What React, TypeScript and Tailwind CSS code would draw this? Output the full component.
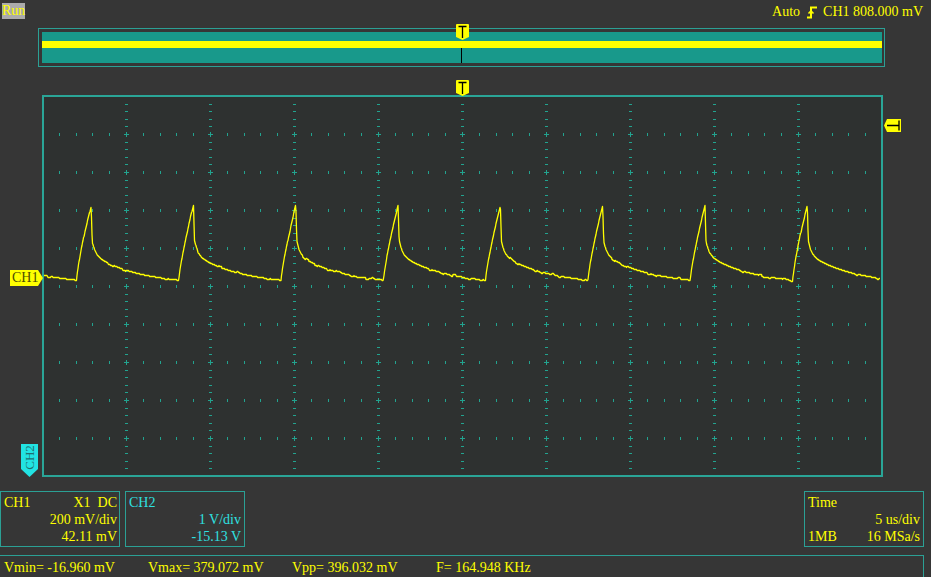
import React from 'react';

// waveform: sawtooth-like pulses, period in px at 5us/div
const PERIOD = 102.3;
const RISE_AT = 76.5;

function traceY(x: number) {
  let t = (x - RISE_AT) % PERIOD;
  if (t < 0) t += PERIOD;
  if (t <= 14.7) return 279.5 - 74.5 * Math.pow(t / 14.7, 0.8);
  if (t < 15.7) return 205 + 35 * (t - 14.7);
  const u = t - 15.7;
  return 280.3 - (27 * Math.exp(-u / 40) + 13 * Math.exp(-u / 3) - (2.5 * u) / 86.6);
}

// small deterministic jitter so the decay looks sampled
function jitter(i: number) {
  const s = Math.sin(i * 12.9898) * 43758.5453;
  const r = s - Math.floor(s);
  return r > 0.86 ? 1 : r < 0.08 ? -1 : 0;
}

function tracePoints() {
  const pts: string[] = [];
  for (let x = 44; x <= 880; x += 0.5) {
    const y = Math.round(traceY(x)) + jitter(Math.floor(x / 3));
    pts.push(`${x},${y + 0.5}`);
  }
  return pts.join(' ');
}

const MAJOR_X = [126, 210, 294, 378, 462, 546, 630, 714, 798];
const MAJOR_Y = [134, 172, 210, 248, 286, 324, 362, 400, 438];

function Graticule() {
  const items: React.ReactNode[] = [];
  MAJOR_X.forEach((x) => {
    for (let k = 1; k < 50; k++) {
      if (k % 5 === 0) continue;
      const y = Math.round(96 + 7.6 * k);
      items.push(<rect key={`v${x}-${k}`} x={x - 1} y={y} width={3} height={1} />);
    }
  });
  MAJOR_Y.forEach((y) => {
    for (let k = 1; k < 50; k++) {
      if (k % 5 === 0) continue;
      const x = Math.round(42 + 16.8 * k);
      items.push(<rect key={`h${y}-${k}`} x={x} y={y - 1} width={1} height={3} />);
    }
  });
  MAJOR_X.forEach((x) =>
    MAJOR_Y.forEach((y) => {
      items.push(<rect key={`ca${x}-${y}`} x={x - 2} y={y} width={5} height={1} />);
      items.push(<rect key={`cb${x}-${y}`} x={x} y={y - 2} width={1} height={5} />);
    })
  );
  return <g fill="#22a38f" shapeRendering="crispEdges">{items}</g>;
}

function TMarker() {
  return (
    <svg width={13} height={16} viewBox="0 0 13 16" className="block">
      <path d="M1 0 H12 Q13 0 13 1 V13 L6.5 16 L0 13 V1 Q0 0 1 0 Z" fill="#ffff00" />
      <path d="M2.5 2.5 H10.5 M6.5 2.5 V14" stroke="#000" strokeWidth={1.3} fill="none" />
    </svg>
  );
}

function EdgeIcon() {
  return (
    <svg width={10} height={13} viewBox="0 0 10 13" className="block">
      <path d="M0 11.5 H4 V1.5 H10" stroke="#ffff00" strokeWidth={2} fill="none" />
      <path d="M1.5 7.5 L4 5 L6.5 7.5" stroke="#ffff00" strokeWidth={1.6} fill="none" />
    </svg>
  );
}

export default function App() {
  return (
    <div className="w-[931px] h-[577px] bg-[#363636] flex flex-col overflow-hidden font-['Liberation_Serif','Times_New_Roman',serif] text-[14px] leading-[16px] text-[#ffff00]">
      {/* top line */}
      <div className="h-[28px] shrink-0 flex items-start justify-between">
        <div className="ml-[2px] mt-[3px] w-[23px] h-[16px] bg-[#ababab] text-center">Run</div>
        <div className="mt-[4px] mr-[8px] flex items-center">
          <span>Auto</span>
          <span className="ml-[7px] mr-[6px]">
            <EdgeIcon />
          </span>
          <span className="whitespace-pre">CH1 808.000 mV</span>
        </div>
      </div>

      {/* memory overview */}
      <div className="relative ml-[38px] w-[847px] h-[39px] shrink-0 border border-[#2ba095] pt-[3px] pb-[3px] pl-[3px] pr-[2px]">
        <div className="h-full bg-[#18998b] pt-[9px]">
          <div className="h-[7px] bg-[#ffff00]" />
          <div className="ml-[419px] w-px h-[15px] bg-black" />
        </div>
        <div className="absolute left-[417px] top-[-5px]">
          <TMarker />
        </div>
      </div>

      {/* plot */}
      <div className="relative ml-[42px] mt-[28px] w-[841px] h-[382px] shrink-0">
        <div className="w-full h-full border-2 border-[#2aa597] bg-[#2e3130]">
          <svg width={837} height={378} viewBox="44 97 837 378" className="block">
            <Graticule />
            <polyline points={tracePoints()} fill="none" stroke="#ffff00" strokeWidth={1.3} strokeLinejoin="round" />
          </svg>
        </div>

        <div className="absolute left-[414px] top-[-15px]">
          <TMarker />
        </div>

        {/* trigger level */}
        <div className="absolute left-[842px] top-[24px]">
          <svg width={17} height={13} viewBox="0 0 17 13" className="block">
            <path d="M0 6.5 L3 0 H17 V13 H3 Z" fill="#ffff00" />
            <path d="M3 6.5 H15 M15 1.5 V11.5" stroke="#000" strokeWidth={1.3} fill="none" />
          </svg>
        </div>

        {/* CH1 level */}
        <div className="absolute left-[-32px] top-[175px] w-[33px] h-[16px]">
          <svg width={33} height={16} viewBox="0 0 33 16" className="absolute inset-0">
            <path d="M0 0 H28 L33 8 L28 16 H0 Z" fill="#ffff00" />
          </svg>
          <span className="relative block pl-[2px] text-[#4d4d00] leading-[16px]">CH1</span>
        </div>

        {/* CH2 level */}
        <div className="absolute left-[-21px] top-[349px] w-[17px] h-[33px]">
          <svg width={17} height={33} viewBox="0 0 17 33" className="absolute inset-0">
            <path d="M0 0 H17 V25 L8.5 33 L0 25 Z" fill="#22e3e3" />
          </svg>
          <div className="absolute left-0 top-0 w-[17px] h-[27px] flex items-center justify-center">
            <span className="block -rotate-90 text-[13px] leading-[13px] text-[#1f6f6f] whitespace-nowrap">CH2</span>
          </div>
        </div>
      </div>

      {/* channel / time boxes */}
      <div className="mt-[14px] h-[56px] shrink-0 flex">
        <div className="w-[120px] h-full border border-[#2ba095] pt-[2px] pl-[3px] pr-[2px] leading-[17px]">
          <div className="flex justify-between">
            <span>CH1</span>
            <span className="whitespace-pre">X1  DC</span>
          </div>
          <div className="text-right">200 mV/div</div>
          <div className="text-right">42.11 mV</div>
        </div>
        <div className="ml-[5px] w-[120px] h-full border border-[#2ba095] pt-[2px] pl-[3px] pr-[3px] leading-[17px] text-[#2fe0e0]">
          <div>CH2</div>
          <div className="text-right">1 V/div</div>
          <div className="text-right">-15.13 V</div>
        </div>
        <div className="ml-auto mr-[7px] w-[120px] h-full border border-[#2ba095] pt-[2px] pl-[3px] pr-[3px] leading-[17px]">
          <div>Time</div>
          <div className="text-right">5 us/div</div>
          <div className="flex justify-between">
            <span>1MB</span>
            <span>16 MSa/s</span>
          </div>
        </div>
      </div>

      {/* measurements */}
      <div className="mt-[8px] w-[924px] flex-1 border-t border-r border-[#2ba095] pl-[4px] pt-[4px] flex">
        <span className="w-[144px] shrink-0">Vmin= -16.960 mV</span>
        <span className="w-[144px] shrink-0">Vmax= 379.072 mV</span>
        <span className="w-[144px] shrink-0">Vpp= 396.032 mV</span>
        <span className="w-[144px] shrink-0">F= 164.948 KHz</span>
      </div>
    </div>
  );
}
